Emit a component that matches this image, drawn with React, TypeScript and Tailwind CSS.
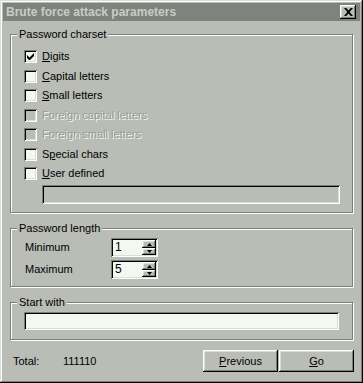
import React from "react";

const BG = "bg-[#b9bdb5]";

function Sunken({ className = "", children }: { className?: string; children?: React.ReactNode }) {
  return (
    <div
      className={
        "shadow-[inset_1px_1px_0_#7b7f79,inset_-1px_-1px_0_#ffffff,inset_2px_2px_0_#000000,inset_-2px_-2px_0_#dadfd6] " +
        className
      }
    >
      {children}
    </div>
  );
}

const raised =
  "shadow-[inset_-1px_-1px_0_#000000,inset_1px_1px_0_#ffffff,inset_-2px_-2px_0_#7b7f79,inset_2px_2px_0_#dadfd6]";

function Group({
  label,
  className = "",
  children,
}: {
  label: string;
  className?: string;
  children?: React.ReactNode;
}) {
  return (
    <div
      className={
        "relative mx-[7px] border border-[#7b7f79] shadow-[1px_1px_0_#ffffff,inset_1px_1px_0_#ffffff] " + className
      }
    >
      <span className={"absolute left-[6px] top-[-8px] px-[2px] text-[11px] leading-[14px] text-black " + BG}>
        {label}
      </span>
      {children}
    </div>
  );
}

function Check({
  label,
  checked,
  disabled,
  h,
}: {
  label: React.ReactNode;
  checked?: boolean;
  disabled?: boolean;
  h: string;
}) {
  return (
    <div className={"flex items-start " + h}>
      <Sunken className={"mt-[3px] flex h-[13px] w-[13px] items-center justify-center " + (disabled ? BG : "bg-[#f4f8f0]")}>
        {checked && (
          <svg width="7" height="7" viewBox="0 0 7 7" className="block">
            <path d="M0 2v3l2 2h1l4-4V0L2.5 4.5z" fill="#000" />
          </svg>
        )}
      </Sunken>
      <span
        className={
          "ml-[5px] mt-[1px] text-[11px] leading-[17px] " +
          (disabled ? "text-[#979b93] [text-shadow:1px_1px_0_#f4f8f0]" : "text-black")
        }
      >
        {label}
      </span>
    </div>
  );
}

function Spin({ value }: { value: string }) {
  return (
    <Sunken className="flex h-[19px] w-[47px] bg-[#f4f8f0] p-[2px]">
      <span className="flex-1 pl-[2px] text-[12px] leading-[15px] text-black">{value}</span>
      <div className="flex w-[14px] flex-col">
        <div className={"flex h-[8px] items-center justify-center " + BG + " " + raised}>
          <svg width="5" height="3" viewBox="0 0 5 3" className="block">
            <path d="M2.5 0L5 3H0z" fill="#000" />
          </svg>
        </div>
        <div className={"flex h-[7px] items-center justify-center " + BG + " " + raised}>
          <svg width="5" height="3" viewBox="0 0 5 3" className="block">
            <path d="M0 0h5L2.5 3z" fill="#000" />
          </svg>
        </div>
      </div>
    </Sunken>
  );
}

export default function App() {
  return (
    <div
      className={
        "flex h-[383px] w-[363px] flex-col p-[3px] shadow-[inset_-1px_-1px_0_#000000,inset_1px_1px_0_#dadfd6,inset_-2px_-2px_0_#7b7f79,inset_2px_2px_0_#ffffff] " +
        BG
      }
      style={{ fontFamily: '"Liberation Sans", Arial, sans-serif' }}
    >
      {/* Title bar */}
      <div className="flex h-[18px] items-center bg-[#7e837d]">
        <span className="flex-1 pl-[3px] text-[12px] font-bold leading-[18px] text-[#c9cdc5]">
          Brute force attack parameters
        </span>
        <div className={"mr-[4px] flex h-[14px] w-[16px] items-center justify-center " + BG + " " + raised}>
          <svg width="9" height="8" viewBox="0 0 9 8" className="block">
            <path d="M0 0h2.2l2.3 2.6L6.8 0H9L5.6 4 9 8H6.8L4.5 5.4 2.2 8H0l3.4-4z" fill="#000" />
          </svg>
        </div>
      </div>

      {/* Password charset */}
      <Group label="Password charset" className="mt-[13px] pl-[13px] pr-[12px] pt-[12px] pb-[8px]">
        <Check h="h-[20px]" checked label={<><u>D</u>igits</>} />
        <Check h="h-[19px]" label={<><u>C</u>apital letters</>} />
        <Check h="h-[20px]" label={<><u>S</u>mall letters</>} />
        <Check h="h-[19px]" disabled label="Foreign capital letters" />
        <Check h="h-[20px]" disabled label="Foreign small letters" />
        <Check h="h-[19px]" label={<>S<u>p</u>ecial chars</>} />
        <Check h="h-[20px]" label={<><u>U</u>ser defined</>} />
        <Sunken className="ml-[18px] mt-[1px] h-[19px]" />
      </Group>

      {/* Password length */}
      <Group label="Password length" className="mt-[15px] pl-[14px] pt-[9px] pb-[7px]">
        <div className="flex h-[19px] items-center">
          <span className="w-[86px] text-[11px] text-black">Minimum</span>
          <Spin value="1" />
        </div>
        <div className="mt-[3px] flex h-[19px] items-center">
          <span className="w-[86px] text-[11px] text-black">Maximum</span>
          <Spin value="5" />
        </div>
      </Group>

      {/* Start with */}
      <Group label="Start with" className="mt-[15px] px-[13px] pt-[9px] pb-[9px]">
        <Sunken className="h-[18px] bg-[#f4f8f0]" />
      </Group>

      {/* Bottom row */}
      <div className="mt-[10px] flex items-center pl-[10px] pr-[6px]">
        <span className="w-[50px] text-[11px] text-black">Total:</span>
        <span className="flex-1 text-[11px] text-black">111110</span>
        <button className={"h-[22px] w-[75px] text-[11px] text-black " + BG + " " + raised}>
          <u>P</u>revious
        </button>
        <button className={"ml-[1px] h-[22px] w-[75px] text-[11px] text-black " + BG + " " + raised}>
          <u>G</u>o
        </button>
      </div>
    </div>
  );
}
